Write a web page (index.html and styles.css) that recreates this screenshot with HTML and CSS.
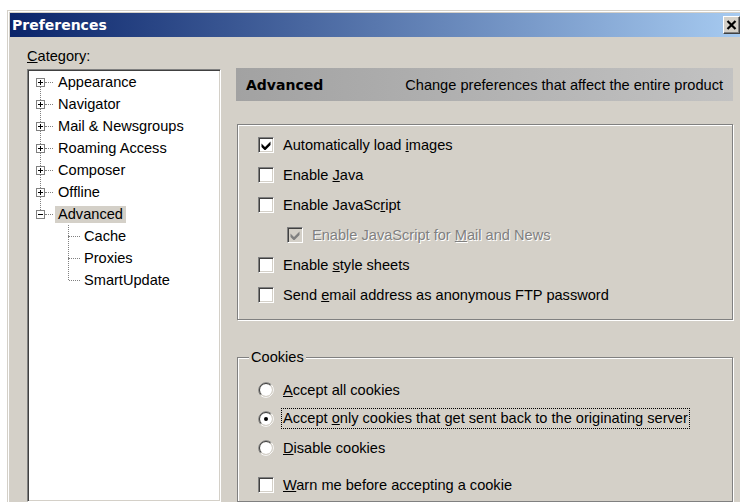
FILE: index.html
```html
<!DOCTYPE html>
<html lang="en">
<head>
<meta charset="utf-8">
<title>Preferences</title>
<link rel="stylesheet" href="styles.css">
</head>
<body>
<div class="window">
  <div class="titlebar">
    <span class="title">Preferences</span>
    <button class="close" type="button" aria-label="Close">
      <svg width="11" height="10" viewBox="0 0 11 10"><path d="M1.5 1 L9.5 9 M9.5 1 L1.5 9" stroke="#000" stroke-width="2.2" fill="none"/></svg>
    </button>
  </div>

  <div class="main">
    <div class="sidebar">
      <div class="cat-label"><u>C</u>ategory:</div>
      <div class="tree">
        <div class="node top"><svg class="expander" viewBox="0 0 9 9"><rect x=".5" y=".5" width="8" height="8" fill="#fff" stroke="#808080"/><path d="M2 4.5H7M4.5 2V7" stroke="#000"/></svg><span class="twig"></span><span class="label">Appearance</span></div>
        <div class="node top"><svg class="expander" viewBox="0 0 9 9"><rect x=".5" y=".5" width="8" height="8" fill="#fff" stroke="#808080"/><path d="M2 4.5H7M4.5 2V7" stroke="#000"/></svg><span class="twig"></span><span class="label">Navigator</span></div>
        <div class="node top"><svg class="expander" viewBox="0 0 9 9"><rect x=".5" y=".5" width="8" height="8" fill="#fff" stroke="#808080"/><path d="M2 4.5H7M4.5 2V7" stroke="#000"/></svg><span class="twig"></span><span class="label">Mail &amp; Newsgroups</span></div>
        <div class="node top"><svg class="expander" viewBox="0 0 9 9"><rect x=".5" y=".5" width="8" height="8" fill="#fff" stroke="#808080"/><path d="M2 4.5H7M4.5 2V7" stroke="#000"/></svg><span class="twig"></span><span class="label">Roaming Access</span></div>
        <div class="node top"><svg class="expander" viewBox="0 0 9 9"><rect x=".5" y=".5" width="8" height="8" fill="#fff" stroke="#808080"/><path d="M2 4.5H7M4.5 2V7" stroke="#000"/></svg><span class="twig"></span><span class="label">Composer</span></div>
        <div class="node top"><svg class="expander" viewBox="0 0 9 9"><rect x=".5" y=".5" width="8" height="8" fill="#fff" stroke="#808080"/><path d="M2 4.5H7M4.5 2V7" stroke="#000"/></svg><span class="twig"></span><span class="label">Offline</span></div>
        <div class="node top last"><svg class="expander" viewBox="0 0 9 9"><rect x=".5" y=".5" width="8" height="8" fill="#fff" stroke="#808080"/><path d="M2 4.5H7" stroke="#000"/></svg><span class="twig"></span><span class="label selected">Advanced</span></div>
        <div class="node child first"><span class="label">Cache</span></div>
        <div class="node child"><span class="label">Proxies</span></div>
        <div class="node child"><span class="label">SmartUpdate</span></div>
      </div>
    </div>

    <div class="content">
      <div class="header">
        <span class="h-title">Advanced</span>
        <span class="h-desc">Change preferences that affect the entire product</span>
      </div>

      <div class="group general">
        <div class="opt">
          <span class="cb"><svg width="10" height="10" viewBox="0 0 10 10"><polygon points="0.5,3.5 4,7 9.5,1.5 9.5,5 4,10.5 0.5,7" fill="#000"/></svg></span>
          <span>Automatically load <u>i</u>mages</span>
        </div>
        <div class="opt"><span class="cb"></span><span>Enable <u>J</u>ava</span></div>
        <div class="opt"><span class="cb"></span><span>Enable JavaSc<u>r</u>ipt</span></div>
        <div class="opt sub disabled">
          <span class="cb"><svg width="10" height="10" viewBox="0 0 10 10"><polygon points="0.5,3.5 4,7 9.5,1.5 9.5,5 4,10.5 0.5,7" fill="#808080"/></svg></span>
          <span class="txt">Enable JavaScript for <u>M</u>ail and News</span>
        </div>
        <div class="opt"><span class="cb"></span><span>Enable <u>s</u>tyle sheets</span></div>
        <div class="opt"><span class="cb"></span><span>Send <u>e</u>mail address as anonymous FTP password</span></div>
      </div>

      <div class="group cookies">
        <span class="legend">Cookies</span>
        <div class="opt radio-row">
          <svg class="radio" width="16" height="16" viewBox="0 0 16 16"><circle cx="8" cy="8" r="6" fill="#fff"/><path d="M2.7 13.3A7.5 7.5 0 0 1 13.3 2.7" stroke="#808080" fill="none"/><path d="M13.3 2.7A7.5 7.5 0 0 1 2.7 13.3" stroke="#fff" fill="none"/><path d="M3.4 12.6A6.5 6.5 0 0 1 12.6 3.4" stroke="#404040" fill="none"/><path d="M12.6 3.4A6.5 6.5 0 0 1 3.4 12.6" stroke="#d4d0c8" fill="none"/></svg>
          <span><u>A</u>ccept all cookies</span>
        </div>
        <div class="opt radio-row">
          <svg class="radio" width="16" height="16" viewBox="0 0 16 16"><circle cx="8" cy="8" r="6" fill="#fff"/><path d="M2.7 13.3A7.5 7.5 0 0 1 13.3 2.7" stroke="#808080" fill="none"/><path d="M13.3 2.7A7.5 7.5 0 0 1 2.7 13.3" stroke="#fff" fill="none"/><path d="M3.4 12.6A6.5 6.5 0 0 1 12.6 3.4" stroke="#404040" fill="none"/><path d="M12.6 3.4A6.5 6.5 0 0 1 3.4 12.6" stroke="#d4d0c8" fill="none"/><circle cx="8" cy="8" r="2" fill="#000"/></svg>
          <span class="focus">Accept <u>o</u>nly cookies that get sent back to the originating server</span>
        </div>
        <div class="opt radio-row">
          <svg class="radio" width="16" height="16" viewBox="0 0 16 16"><circle cx="8" cy="8" r="6" fill="#fff"/><path d="M2.7 13.3A7.5 7.5 0 0 1 13.3 2.7" stroke="#808080" fill="none"/><path d="M13.3 2.7A7.5 7.5 0 0 1 2.7 13.3" stroke="#fff" fill="none"/><path d="M3.4 12.6A6.5 6.5 0 0 1 12.6 3.4" stroke="#404040" fill="none"/><path d="M12.6 3.4A6.5 6.5 0 0 1 3.4 12.6" stroke="#d4d0c8" fill="none"/></svg>
          <span><u>D</u>isable cookies</span>
        </div>
        <div class="opt warn"><span class="cb"></span><span><u>W</u>arn me before accepting a cookie</span></div>
      </div>
    </div>
  </div>
</div>
</body>
</html>
```

FILE: styles.css
```css
html, body {
  margin: 0;
  height: 100%;
}

body {
  background: #fff;
  font-family: "Liberation Sans", Arial, sans-serif;
  font-size: 14.6px;
  color: #000;
  overflow: hidden;
}

/* Dialog frame */
.window {
  margin: 10px 0 0 7px;
  height: 492px;
  box-sizing: border-box;
  border-top: 1px solid #d4d0c8;
  border-left: 1px solid #d4d0c8;
  box-shadow: inset 1px 1px 0 #fff;
  padding: 2px 0 0 2px;
  background: #d4d0c8;
  display: flex;
  flex-direction: column;
  overflow: hidden;
}

.titlebar {
  flex: none;
  height: 24px;
  display: flex;
  align-items: center;
  justify-content: space-between;
  background: linear-gradient(to right, #0a246a, #a6caf0);
}

.title {
  font: bold 14px "DejaVu Sans", Verdana, sans-serif;
  color: #fff;
  padding-left: 2px;
}

.close {
  width: 17px;
  height: 18px;
  padding: 0;
  box-sizing: border-box;
  border: 1px solid;
  border-color: #fff #404040 #404040 #fff;
  box-shadow: inset -1px -1px 0 #808080;
  background: #d4d0c8;
  display: flex;
  align-items: center;
  justify-content: center;
}

.main {
  flex: 1;
  min-height: 0;
  display: flex;
  padding-left: 17px;
}

/* Category tree */
.sidebar {
  flex: none;
  width: 194px;
  display: flex;
  flex-direction: column;
}

.cat-label {
  margin-top: 11px;
  height: 16px;
  line-height: 16px;
}

.tree {
  flex: 1;
  margin-top: 5px;
  background: #fff;
  border: 1px solid;
  border-color: #808080 #fff #fff #808080;
  box-shadow: inset 1px 1px 0 #404040, inset -1px -1px 0 #d4d0c8;
  padding: 1px 0 0 1px;
}

.node {
  position: relative;
  display: flex;
  align-items: center;
  height: 22px;
  padding-left: 7px;
}

.expander {
  position: relative;
  z-index: 1;
  flex: none;
  width: 9px;
  height: 9px;
  display: block;
}

.twig {
  width: 8px;
  border-top: 1px dotted #808080;
  margin: 1px 2px 0 0;
}

.label {
  padding: 0 3px;
  line-height: 17px;
  white-space: nowrap;
}

.label.selected {
  background: #d4d0c8;
}

.node.top:not(.last)::before {
  content: "";
  position: absolute;
  left: 11px;
  top: 11px;
  height: 22px;
  border-left: 1px dotted #808080;
}

.node.child {
  padding-left: 52px;
}

.node.child::before {
  content: "";
  position: absolute;
  left: 39px;
  top: -11px;
  height: 22px;
  border-left: 1px dotted #808080;
}

.node.child.first::before {
  top: 0;
  height: 11px;
}

.node.child::after {
  content: "";
  position: absolute;
  left: 40px;
  top: 11px;
  width: 11px;
  border-top: 1px dotted #808080;
}

/* Preference panel */
.content {
  flex: 1;
  margin: 0 7px 0 15px;
  display: flex;
  flex-direction: column;
}

.header {
  flex: none;
  margin-top: 31px;
  height: 33px;
  padding: 0 10px;
  display: flex;
  align-items: center;
  justify-content: space-between;
  background: linear-gradient(to right, #a2a2a2, #c2c2c2);
}

.h-title {
  font: bold 14px "DejaVu Sans", Verdana, sans-serif;
}

.group {
  position: relative;
  border: 1px solid #808080;
  box-shadow: inset 1px 1px 0 #fff, 1px 1px 0 #fff;
  margin-left: 1px;
}

.general {
  flex: none;
  margin-top: 23px;
  padding: 5px 0 9px 20px;
}

.cookies {
  flex: 1;
  margin-top: 37px;
  padding: 17px 0 0 20px;
}

.legend {
  position: absolute;
  left: 11px;
  top: -9px;
  padding: 0 2px;
  line-height: 16px;
  background: #d4d0c8;
}

.opt {
  display: flex;
  align-items: center;
  gap: 9px;
  height: 30px;
  white-space: nowrap;
}

.opt.sub {
  padding-left: 29px;
}

.opt.radio-row {
  height: 29px;
}

.opt.warn {
  margin-top: 8px;
}

.disabled .txt {
  color: #808080;
  text-shadow: 1px 1px 0 #fff;
}

.cb {
  flex: none;
  width: 16px;
  height: 16px;
  box-sizing: border-box;
  border: 1px solid;
  border-color: #808080 #fff #fff #808080;
  box-shadow: inset 1px 1px 0 #404040, inset -1px -1px 0 #d4d0c8;
  background: #fff;
  display: flex;
  align-items: center;
  justify-content: center;
}

.disabled .cb {
  background: #d4d0c8;
}

.radio {
  flex: none;
  display: block;
}

.focus {
  margin-left: -2px;
  padding: 0 1px;
  line-height: 19px;
  border: 1px dotted #000;
}
```
